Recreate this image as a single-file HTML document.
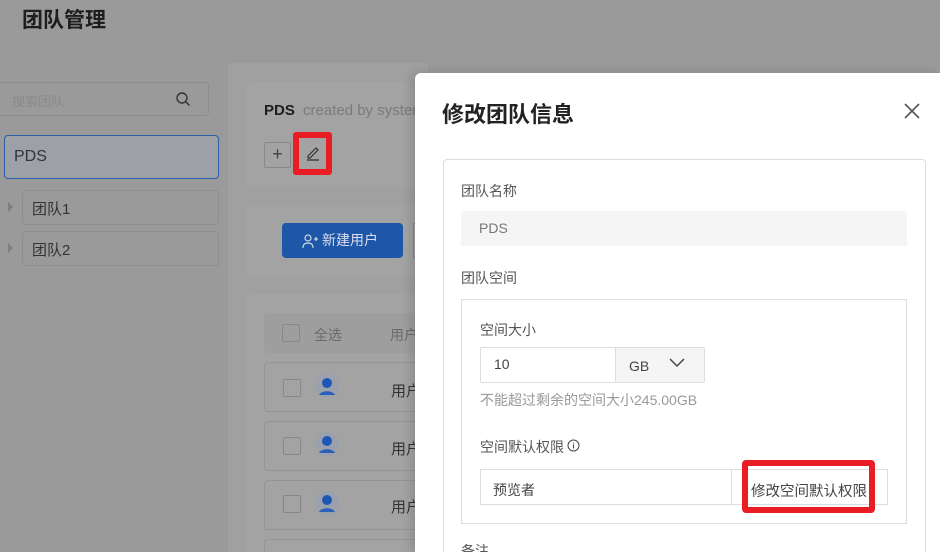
<!DOCTYPE html>
<html style="width:940px;height:552px;overflow:hidden;background:#9a9a9a"><head><meta charset="utf-8"><style>
*{box-sizing:border-box;margin:0;padding:0}
body{width:940px;height:552px;overflow:hidden;font-family:"Liberation Sans","Noto Sans CJK SC",sans-serif;}
#w{position:absolute;left:0;top:0;width:940px;height:552px;overflow:hidden;background:#9a9a9a}
.a{position:absolute}
.t{font-size:14px;color:#444}
</style></head><body><div id="w">
<div class="a" style="left:22px;top:4px;font-size:21px;font-weight:bold;color:#1e1e1e">团队管理</div>
<div class="a" style="left:228px;top:63px;width:200px;height:489px;background:#a0a0a0"></div>
<div class="a" style="left:-4px;top:82px;width:213px;height:34px;border:1px solid #8c8c8c;border-radius:4px"></div>
<div class="a" style="left:12px;top:91px;font-size:13px;color:#8a8a8a">搜索团队</div>
<svg class="a" style="left:175px;top:91px" width="16" height="16" viewBox="0 0 16 16"><circle cx="7" cy="7" r="5" fill="none" stroke="#333" stroke-width="1.4"/><path d="M11 11l3.5 3.5" stroke="#333" stroke-width="1.4"/></svg>
<div class="a" style="left:4px;top:135px;width:215px;height:44px;border:1px solid #2b5fa8;border-radius:4px;background:#9da0a7"></div>
<div class="a" style="left:14px;top:148px;font-size:16px;color:#333">PDS</div>
<div class="a" style="left:8px;top:202px;width:0;height:0;border-left:5px solid #7e7e7e;border-top:5px solid transparent;border-bottom:5px solid transparent"></div>
<div class="a" style="left:22px;top:190px;width:197px;height:35px;border:1px solid #8e8e8e;border-radius:4px"></div>
<div class="a" style="left:32px;top:198px;font-size:15px;color:#333">团队1</div>
<div class="a" style="left:8px;top:243px;width:0;height:0;border-left:5px solid #7e7e7e;border-top:5px solid transparent;border-bottom:5px solid transparent"></div>
<div class="a" style="left:22px;top:231px;width:197px;height:35px;border:1px solid #8e8e8e;border-radius:4px"></div>
<div class="a" style="left:32px;top:239px;font-size:15px;color:#333">团队2</div>
<div class="a" style="left:246px;top:82px;width:200px;height:105px;background:#a3a3a3;border-radius:6px"></div>
<div class="a" style="left:264px;top:102px;font-size:15px;font-weight:bold;color:#1e1e1e">PDS <span style="font-weight:normal;color:#7a7a7a;font-size:15px;margin-left:4px">created by system</span></div>
<div class="a" style="left:264px;top:142px;width:27px;height:26px;border:1px solid #888;border-radius:2px;text-align:center;font-size:18px;line-height:23px;color:#444">+</div>
<div class="a" style="left:293px;top:132px;width:39px;height:43px;border:6px solid #ea1c24;border-radius:3px;background:#a3a3a3"></div>
<svg class="a" style="left:304px;top:144px" width="18" height="18" viewBox="0 0 18 18"><path d="M4 12l8-8 2 2-8 8H4z" fill="none" stroke="#333" stroke-width="1.2"/><path d="M3 16h12" stroke="#333" stroke-width="1.3"/></svg>
<div class="a" style="left:246px;top:205px;width:200px;height:72px;background:#a3a3a3;border-radius:6px"></div>
<div class="a" style="left:282px;top:223px;width:121px;height:35px;background:#1e56a8;border-radius:4px;color:#dde;font-size:14px;line-height:35px;padding-left:40px">新建用户</div>
<svg class="a" style="left:302px;top:233px" width="16" height="16" viewBox="0 0 16 16"><circle cx="6" cy="5" r="3" fill="none" stroke="#cdd" stroke-width="1.2"/><path d="M1 15c0-4 2-5 5-5s5 1 5 5M12 6h4M14 4v4" fill="none" stroke="#cdd" stroke-width="1.2"/></svg>
<div class="a" style="left:413px;top:223px;width:4px;height:35px;background:#a8a8a8;border:1px solid #888"></div>
<div class="a" style="left:246px;top:294px;width:200px;height:258px;background:#a3a3a3;border-radius:6px 6px 0 0"></div>
<div class="a" style="left:264px;top:313px;width:160px;height:40px;background:#9e9e9e;border-radius:4px"></div>
<div class="a" style="left:282px;top:324px;width:18px;height:18px;border:1px solid #888;border-radius:2px"></div>
<div class="a t" style="left:314px;top:325px;color:#6a6a6a">全选</div>
<div class="a t" style="left:390px;top:325px;color:#6a6a6a">用户</div>
<div class="a" style="left:264px;top:362px;width:160px;height:50px;border:1px solid #949494;border-radius:4px"></div>
<div class="a" style="left:264px;top:421px;width:160px;height:50px;border:1px solid #949494;border-radius:4px"></div>
<div class="a" style="left:264px;top:480px;width:160px;height:50px;border:1px solid #949494;border-radius:4px"></div>
<div class="a" style="left:264px;top:539px;width:160px;height:13px;border:1px solid #949494;border-bottom:none;border-radius:4px 4px 0 0"></div>
<div class="a" style="left:283px;top:379px;width:18px;height:18px;border:1px solid #888;border-radius:2px"></div>
<div class="a" style="left:283px;top:437px;width:18px;height:18px;border:1px solid #888;border-radius:2px"></div>
<div class="a" style="left:283px;top:495px;width:18px;height:18px;border:1px solid #888;border-radius:2px"></div>
<svg class="a" style="left:315px;top:374px" width="24" height="24" viewBox="0 0 24 24"><circle cx="12" cy="12" r="12" fill="#9aa1ad"/><circle cx="12" cy="9" r="5" fill="#1d57b5"/><path d="M4 21c2-5 14-5 16 0z" fill="#2a60b8"/></svg>
<svg class="a" style="left:315px;top:432px" width="24" height="24" viewBox="0 0 24 24"><circle cx="12" cy="12" r="12" fill="#9aa1ad"/><circle cx="12" cy="9" r="5" fill="#1d57b5"/><path d="M4 21c2-5 14-5 16 0z" fill="#2a60b8"/></svg>
<svg class="a" style="left:315px;top:491px" width="24" height="24" viewBox="0 0 24 24"><circle cx="12" cy="12" r="12" fill="#9aa1ad"/><circle cx="12" cy="9" r="5" fill="#1d57b5"/><path d="M4 21c2-5 14-5 16 0z" fill="#2a60b8"/></svg>
<div class="a" style="left:391px;top:380px;font-size:15px;color:#333">用户</div>
<div class="a" style="left:391px;top:438px;font-size:15px;color:#333">用户</div>
<div class="a" style="left:391px;top:496px;font-size:15px;color:#333">用户</div>
<div class="a" style="left:415px;top:73px;width:525px;height:479px;background:#fff;border-radius:6px 0 0 0;box-shadow:-4px 0 10px rgba(0,0,0,.15)"></div>
<div class="a" style="left:442px;top:97px;font-size:22px;font-weight:bold;color:#222">修改团队信息</div>
<svg class="a" style="left:903px;top:102px" width="18" height="18" viewBox="0 0 18 18"><path d="M2 2l14 14M16 2L2 16" stroke="#555" stroke-width="1.6"/></svg>
<div class="a" style="left:443px;top:159px;width:483px;height:393px;border:1px solid #ddd;border-bottom:none;border-radius:4px 4px 0 0"></div>
<div class="a t" style="left:461px;top:181px;color:#555">团队名称</div>
<div class="a" style="left:461px;top:211px;width:446px;height:35px;background:#f5f5f5;border-radius:2px"></div>
<div class="a t" style="left:479px;top:220px;color:#777">PDS</div>
<div class="a t" style="left:461px;top:268px;color:#555">团队空间</div>
<div class="a" style="left:461px;top:299px;width:446px;height:225px;border:1px solid #ddd"></div>
<div class="a t" style="left:480px;top:320px;color:#555">空间大小</div>
<div class="a" style="left:480px;top:347px;width:225px;height:36px;border:1px solid #ddd;border-radius:2px"></div>
<div class="a" style="left:615px;top:348px;width:89px;height:34px;background:#f5f5f5;border-left:1px solid #ddd"></div>
<div class="a t" style="left:494px;top:356px;color:#444">10</div>
<div class="a t" style="left:629px;top:358px;color:#444">GB</div>
<svg class="a" style="left:668px;top:356px" width="18" height="12" viewBox="0 0 18 12"><path d="M2 3l7 7 7-7" fill="none" stroke="#444" stroke-width="1.5"/></svg>
<div class="a" style="left:480px;top:390px;font-size:14px;color:#999">不能超过剩余的空间大小245.00GB</div>
<div class="a t" style="left:480px;top:437px;color:#555">空间默认权限</div>
<svg class="a" style="left:567px;top:439px" width="13" height="13" viewBox="0 0 13 13"><circle cx="6.5" cy="6.5" r="5.5" fill="none" stroke="#444"/><path d="M6.5 5.5v4M6.5 3.5v1" stroke="#444"/></svg>
<div class="a" style="left:480px;top:469px;width:408px;height:36px;border:1px solid #ddd"></div>
<div class="a" style="left:731px;top:469px;width:1px;height:36px;background:#ddd"></div>
<div class="a t" style="left:493px;top:480px;color:#444">预览者</div>
<div class="a" style="left:742px;top:460px;width:133px;height:53px;border:6px solid #ea1c24;border-radius:4px"></div>
<div class="a" style="left:751px;top:480px;font-size:14.5px;color:#444">修改空间默认权限</div>
<div class="a" style="left:461px;top:541px;height:11px;overflow:hidden;font-size:14px;line-height:20px;color:#555">备注</div>
</div></body></html>
